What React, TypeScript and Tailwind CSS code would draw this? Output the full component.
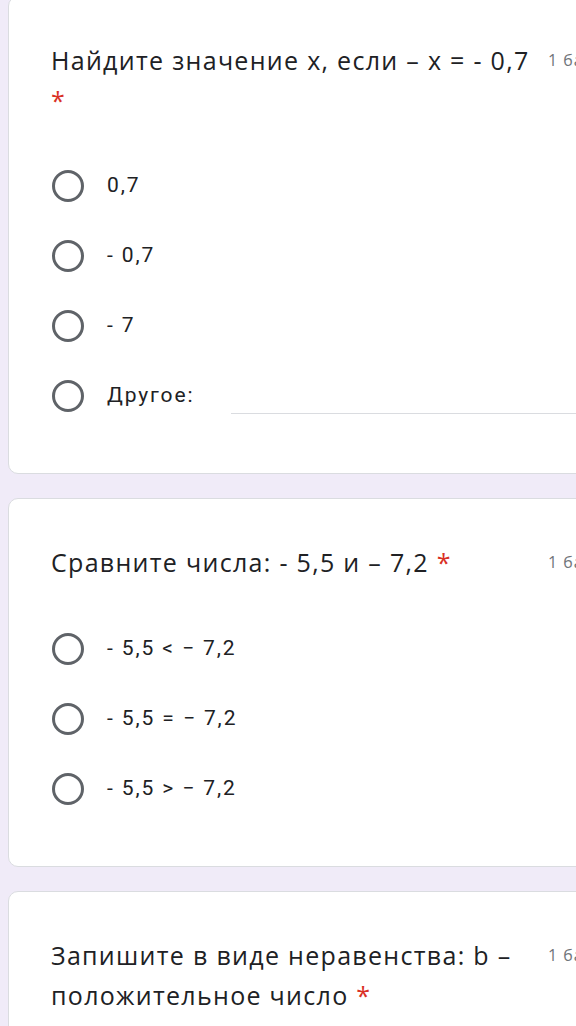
const titleFont = { fontFamily: "'Open Sans', Roboto, sans-serif" };

function Radio({ label, other }: { label: string; other?: boolean }) {
  return (
    <div className="flex h-[70px] items-center">
      <span className="ml-px size-8 shrink-0 rounded-full border-[3px] border-[#5f6368]" />
      <span className="ml-[23px] font-['Roboto',sans-serif] text-[21px] tracking-[1.9px] text-[#202124]">
        {label}
      </span>
      {other && <span className="ml-9 mt-[34px] h-px flex-1 bg-[#dadce0]" />}
    </div>
  );
}

function Card({
  title,
  first,
  children,
}: {
  title: React.ReactNode;
  first?: boolean;
  children?: React.ReactNode;
}) {
  return (
    <div
      className={
        "ml-2 w-[640px] rounded-[10px] border border-[#dadce0] bg-white pl-[42px] pr-4 pt-[43px] pb-[42px] " +
        (first ? "-mt-1" : "")
      }
    >
      <div className="flex items-start">
        <div className="w-[496px] text-[25px] leading-[40px] tracking-[1.3px] text-[#202124]">
          {title}
        </div>
        <div className="ml-px whitespace-nowrap pt-[2px] text-[16px] leading-[36px] tracking-[1px] text-[#70757a]">
          1 балл
        </div>
      </div>
      {children}
    </div>
  );
}

const Star = () => <span className="text-[#d93025]"> *</span>;

export default function App() {
  return (
    <div
      className="flex h-[1026px] w-[576px] flex-col gap-6 overflow-hidden bg-[#f0ebf8]"
      style={titleFont}
    >
      <Card
        first
        title={
          <>
            Найдите значение х, если – х = - 0,7
            <br />
            <span className="text-[#d93025]">*</span>
          </>
        }
      >
        <div className="mt-[31px] flex flex-col">
          <Radio label="0,7" />
          <Radio label="- 0,7" />
          <Radio label="- 7" />
          <Radio label="Другое:" other />
        </div>
      </Card>
      <Card
        title={
          <>
            Сравните числа: - 5,5 и – 7,2
            <Star />
          </>
        }
      >
        <div className="mt-8 flex flex-col">
          <Radio label="- 5,5 < − 7,2" />
          <Radio label="- 5,5 = − 7,2" />
          <Radio label="- 5,5 > − 7,2" />
        </div>
      </Card>
      <Card
        title={
          <>
            Запишите в виде неравенства: b – положительное число
            <Star />
          </>
        }
      />
    </div>
  );
}
